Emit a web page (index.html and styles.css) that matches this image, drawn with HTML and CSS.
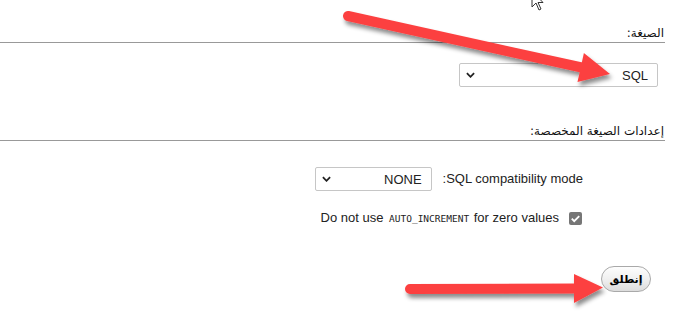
FILE: index.html
```html
<!DOCTYPE html>
<html lang="ar" dir="rtl">
<head>
    <meta charset="UTF-8">
    <meta name="viewport" content="width=device-width, initial-scale=1.0">
    <title>تصدير</title>
    <link rel="stylesheet" href="styles.css">
</head>
<body>
    <div class="panel">
        <div class="legend">الصيغة:</div>
        <div class="format-row">
            <div class="select select-format">
                <span class="select-value">SQL</span>
                <svg class="chevron" viewBox="0 0 10 6"><path d="M1 1l4 4 4-4" /></svg>
            </div>
        </div>

        <div class="legend legend-options">إعدادات الصيغة المخصصة:</div>
        <div class="options">
            <div class="option-row">
                <label class="option-label" dir="ltr">:SQL compatibility mode</label>
                <div class="select select-compat">
                    <span class="select-value">NONE</span>
                    <svg class="chevron" viewBox="0 0 10 6"><path d="M1 1l4 4 4-4" /></svg>
                </div>
            </div>
            <div class="option-row check-row">
                <span class="checkbox">
                    <svg viewBox="0 0 14 14"><path d="M3 7.2l2.6 2.6L11 4.4" /></svg>
                </span>
                <label class="option-label" dir="ltr">Do not use <code>AUTO_INCREMENT</code> for zero values</label>
            </div>
        </div>

        <div class="submit-row">
            <button class="go-button">إنطلق</button>
        </div>
    </div>

    <svg class="overlay" width="678" height="327" viewBox="0 0 678 327">
        <defs>
            <filter id="shadow" x="-10%" y="-50%" width="120%" height="200%">
                <feDropShadow dx="2" dy="4" stdDeviation="2" flood-color="#000" flood-opacity="0.45" />
            </filter>
        </defs>
        <g class="arrow" filter="url(#shadow)">
            <line x1="348" y1="16" x2="584" y2="68" />
            <polygon points="610,74 583.9,52.9 577.5,82.1" />
        </g>
        <g class="arrow" filter="url(#shadow)">
            <line x1="410" y1="289" x2="578" y2="288.5" />
            <polygon points="603,287.5 574,274 574,303" />
        </g>
        <path class="cursor" d="M532 -9v16l4 -4l3 7l2 -1l-3 -6.5h5z" />
    </svg>
</body>
</html>
```

FILE: styles.css
```css
body {
    margin: 0;
    background: #fff;
    color: #222;
    font-family: 'Liberation Sans', Arial, sans-serif;
    font-size: 13px;
    overflow: hidden;
}
.panel {
    width: 665px;
    margin-left: 0;
    margin-right: auto;
}
.legend {
    font-family: 'DejaVu Sans', sans-serif;
    font-size: 12px;
    line-height: 14px;
    color: #111;
    padding-top: 26px;
    padding-bottom: 2px;
    padding-right: 1px;
    border-bottom: 1px solid #999;
}
.legend-options {
    padding-top: 0;
    margin-top: 37px;
}
.format-row {
    display: flex;
    margin-top: 20px;
    padding-right: 7px;
}
.select {
    box-sizing: border-box;
    height: 24px;
    border: 1px solid #c6c6c6;
    border-radius: 2px;
    display: flex;
    align-items: center;
    justify-content: space-between;
    padding: 0 9px 0 6px;
    background: #fff;
    color: #222;
}
.select-format {
    width: 199px;
}
.select-compat {
    width: 117px;
}
.chevron {
    width: 9px;
    height: 6px;
    fill: none;
    stroke: #222;
    stroke-width: 2;
}
.options {
    margin-top: 26px;
    padding-right: 82px;
}
.option-row {
    display: flex;
    align-items: center;
    gap: 11px;
    height: 24px;
}
.check-row {
    height: 16px;
    margin-top: 19px;
    gap: 10px;
    padding-right: 1px;
}
.option-label {
    line-height: 16px;
}
code {
    font-family: 'DejaVu Sans Mono', monospace;
    font-size: 9.5px;
    padding: 0 1px 0 2px;
}
.checkbox {
    width: 13px;
    height: 13px;
    border-radius: 2px;
    background: #767676;
    display: flex;
}
.checkbox svg {
    width: 13px;
    height: 13px;
    fill: none;
    stroke: #fff;
    stroke-width: 2;
}
.submit-row {
    display: flex;
    margin-top: 40px;
    padding-right: 14px;
}
.go-button {
    width: 50px;
    height: 26px;
    border: 1px solid #a9a9a9;
    border-radius: 13px;
    background: linear-gradient(to bottom, #fdfdfd 0%, #f0f0f0 50%, #dcdcdc 100%);
    font-family: 'DejaVu Sans', sans-serif;
    font-size: 11px;
    font-weight: bold;
    color: #000;
    padding: 0;
}
.overlay {
    position: absolute;
    top: 0;
    left: 0;
    pointer-events: none;
}
.arrow line {
    stroke: #fc4141;
    stroke-width: 10;
    stroke-linecap: round;
}
.arrow polygon {
    fill: #fc4141;
}
.cursor {
    fill: #fff;
    stroke: #333;
    stroke-width: 1;
}
```
